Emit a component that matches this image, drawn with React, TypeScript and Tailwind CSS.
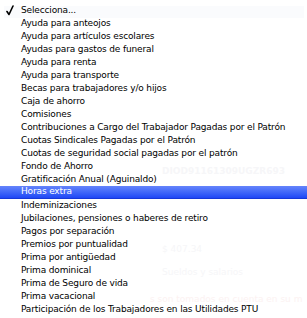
const items = [
  'Selecciona...',
  'Ayuda para anteojos',
  'Ayuda para artículos escolares',
  'Ayudas para gastos de funeral',
  'Ayuda para renta',
  'Ayuda para transporte',
  'Becas para trabajadores y/o hijos',
  'Caja de ahorro',
  'Comisiones',
  'Contribuciones a Cargo del Trabajador Pagadas por el Patrón',
  'Cuotas Sindicales Pagadas por el Patrón',
  'Cuotas de seguridad social pagadas por el patrón',
  'Fondo de Ahorro',
  'Gratificación Anual (Aguinaldo)',
  'Horas extra',
  'Indeminizaciones',
  'Jubilaciones, pensiones o haberes de retiro',
  'Pagos por separación',
  'Premios por puntualidad',
  'Prima por antigüedad',
  'Prima dominical',
  'Prima de Seguro de vida',
  'Prima vacacional',
  'Participación de los Trabajadores en las Utilidades PTU',
];

function Check() {
  return (
    <svg width="8" height="11" viewBox="0 0 8 11" className="ml-[6px]">
      <path d="M1 6.5 L3 9.5 L7 1" fill="none" stroke="#000" strokeWidth="1.6" strokeLinecap="round" strokeLinejoin="round" />
    </svg>
  );
}

export default function App() {
  return (
    <div className="relative w-[307px] h-[318px] overflow-hidden bg-white font-['DejaVu_Sans',sans-serif]">
      {/* form behind the menu, barely visible through it */}
      <div className="absolute inset-0 text-[9px] text-[#f6f6f8]">
        <div className="absolute left-[4px] top-[6px] w-[300px] h-[12px] bg-[#fafbfd]" />
        <div className="absolute left-[162px] top-[165px] font-bold">DIOD91161309UGZR693</div>
        <div className="absolute left-[162px] top-[243px]">$ 407.34</div>
        <div className="absolute left-[162px] top-[266px]">Sueldos y salarios</div>
        <div className="absolute left-[150px] top-[293px] whitespace-nowrap text-[#fcf2f2]">s son tomados en cuenta en su m</div>
      </div>

      <ul className="relative flex flex-col pt-[4px] text-[9px] tracking-[-0.15px] text-black">
        {items.map((item, i) => {
          const active = item === 'Horas extra';
          return (
            <li
              key={item}
              className={
                active
                  ? 'flex h-[13px] items-center whitespace-nowrap text-white bg-gradient-to-b from-[#6584fb] to-[#1f46f6] border-b border-[#1638d8]'
                  : 'flex h-[13px] items-center whitespace-nowrap'
              }
            >
              <span className="flex w-[21px] items-center">{i === 0 && <Check />}</span>
              {item}
            </li>
          );
        })}
      </ul>
    </div>
  );
}
